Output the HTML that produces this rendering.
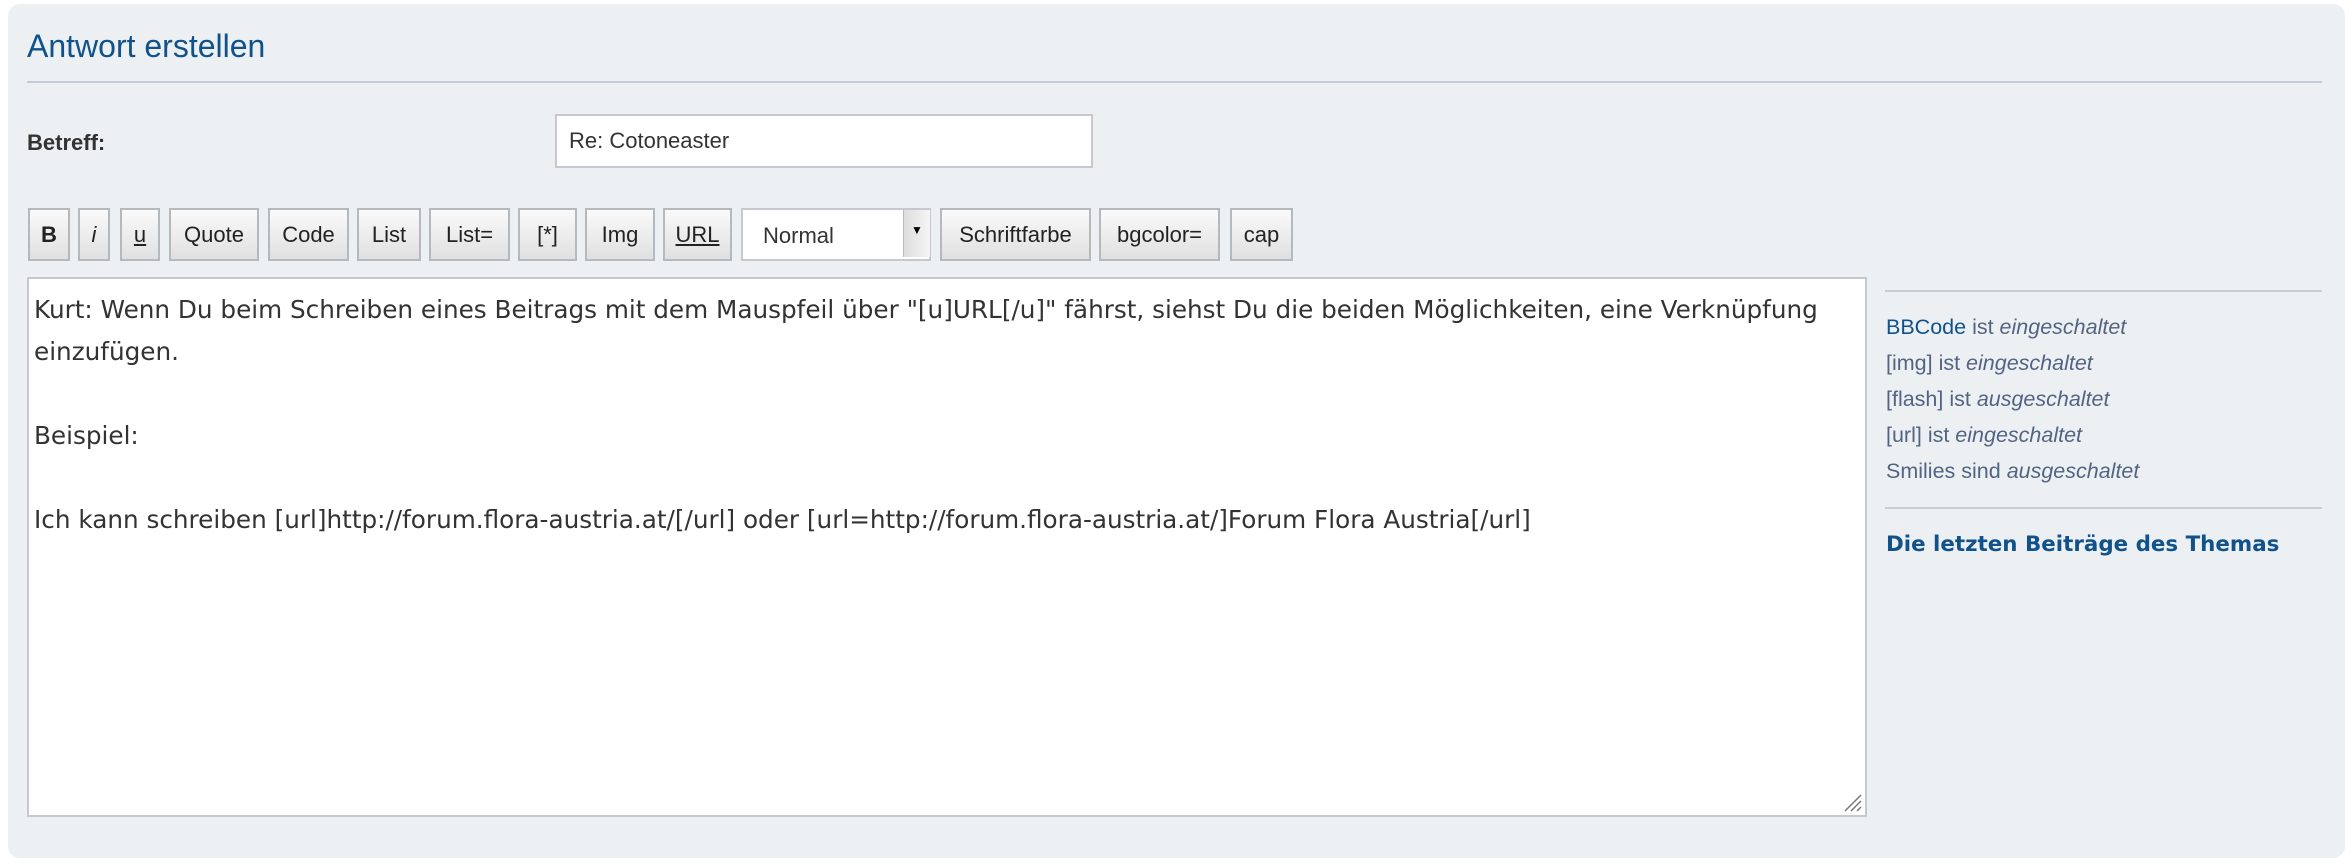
<!DOCTYPE html>
<html><head><meta charset="utf-8"><style>
body{margin:0;width:2352px;height:864px;background:#fff;font-family:"Liberation Sans",sans-serif;position:relative;overflow:hidden}
.panel{position:absolute;left:8px;top:4px;width:2337px;height:854px;background:#ecf0f3;border-radius:12px}
.a{position:absolute;white-space:nowrap}
.btn{position:absolute;top:208px;height:53px;border:2px solid #b4b9be;box-sizing:border-box;background:linear-gradient(#fafafa,#e0e0e0);font-size:22px;color:#222;display:flex;align-items:center;justify-content:center}
.side{font-size:21.5px;color:#536482;left:1886px}
</style></head><body>
<div class="panel"></div>
<div class="a" style="left:27px;top:28px;font-size:32px;color:#105289">Antwort erstellen</div>
<div class="a" style="left:27px;top:81px;width:2295px;height:2px;background:#c3ccd6"></div>
<div class="a" style="left:27px;top:130px;font-size:22px;font-weight:bold;color:#333">Betreff:</div>
<div class="a" style="left:555px;top:114px;width:538px;height:54px;box-sizing:border-box;border:2px solid #c5c9cf;background:#fff;font-size:22px;color:#333;padding:12px 0 0 12px">Re: Cotoneaster</div>
<div class="btn" style="left:28px;width:42px;font-weight:bold">B</div>
<div class="btn" style="left:78px;width:32px;font-style:italic">i</div>
<div class="btn" style="left:120px;width:40px;text-decoration:underline">u</div>
<div class="btn" style="left:169px;width:90px">Quote</div>
<div class="btn" style="left:268px;width:81px">Code</div>
<div class="btn" style="left:357px;width:64px">List</div>
<div class="btn" style="left:429px;width:81px">List=</div>
<div class="btn" style="left:518px;width:59px">[*]</div>
<div class="btn" style="left:585px;width:70px">Img</div>
<div class="btn" style="left:663px;width:69px;text-decoration:underline">URL</div>
<div class="a" style="left:741px;top:208px;width:190px;height:53px;box-sizing:border-box;border:2px solid #c5c9cf;background:#fff;font-size:22px;color:#333;padding:13px 0 0 20px">Normal</div>
<div class="a" style="left:903px;top:210px;width:26px;height:47px;background:linear-gradient(90deg,#ddd,#f5f5f5);border-left:1px solid #bbb;font-size:12px;text-align:center;line-height:40px">▼</div>
<div class="btn" style="left:940px;width:151px">Schriftfarbe</div>
<div class="btn" style="left:1099px;width:121px">bgcolor=</div>
<div class="btn" style="left:1230px;width:63px">cap</div>
<div class="a" style="left:27px;top:277px;width:1840px;height:540px;box-sizing:border-box;border:2px solid #c5c9cf;background:#fff;line-height:42px;color:#333;padding:10px 0 0 5px;white-space:normal;font-family:'DejaVu Sans','Liberation Sans',sans-serif;font-size:24.7px">Kurt: Wenn Du beim Schreiben eines Beitrags mit dem Mauspfeil über "[u]URL[/u]" fährst, siehst Du die beiden Möglichkeiten, eine Verknüpfung einzufügen.<br><br>Beispiel:<br><br>Ich kann schreiben [url]http://forum.flora-austria.at/[/url] oder [url=http://forum.flora-austria.at/]Forum Flora Austria[/url]
<svg style="position:absolute;right:2px;bottom:2px" width="22" height="22"><path d="M4 20L20 4M10 20L20 10M16 20L20 16" stroke="#777" stroke-width="1.5"/></svg></div>
<div class="a" style="left:1885px;top:290px;width:437px;height:2px;background:#c8ced4"></div>
<div class="a side" style="top:315px"><span style="color:#105289">BBCode</span> ist <i>eingeschaltet</i></div>
<div class="a side" style="top:351px">[img] ist <i>eingeschaltet</i></div>
<div class="a side" style="top:387px">[flash] ist <i>ausgeschaltet</i></div>
<div class="a side" style="top:423px">[url] ist <i>eingeschaltet</i></div>
<div class="a side" style="top:459px">Smilies sind <i>ausgeschaltet</i></div>
<div class="a" style="left:1885px;top:507px;width:437px;height:2px;background:#c8ced4"></div>
<div class="a" style="left:1886px;top:532px;font-weight:bold;color:#105289;font-family:'DejaVu Sans',sans-serif;font-size:21.4px">Die letzten Beiträge des Themas</div>
</body></html>
